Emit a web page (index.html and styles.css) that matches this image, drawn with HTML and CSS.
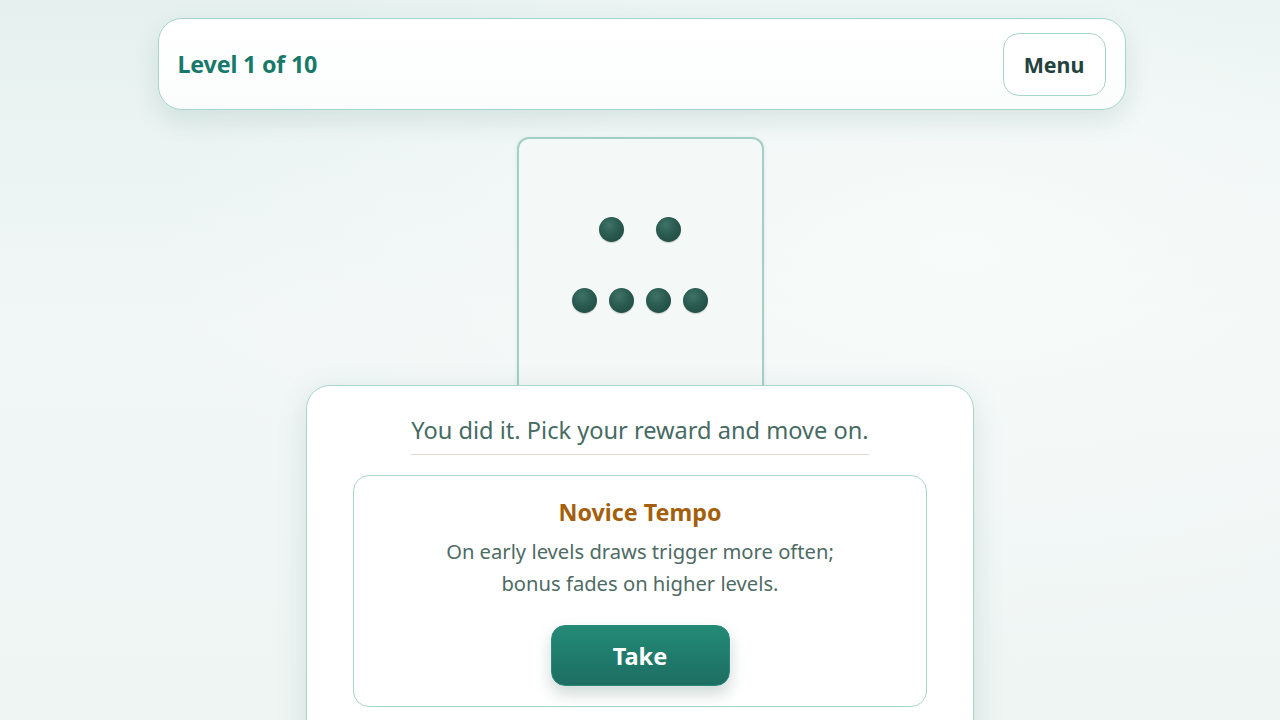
FILE: index.html
```html
<!DOCTYPE html>
<html lang="en">
<head>
    <meta charset="UTF-8">
    <meta name="viewport" content="width=device-width, initial-scale=1.0">
    <title>Level 1</title>
    <link rel="stylesheet" href="styles.css">
</head>
<body>
    <div class="page">
        <header class="topbar">
            <span class="level">Level 1 of 10</span>
            <button class="menu-btn">Menu</button>
        </header>

        <main class="board">
            <div class="card">
                <div class="pips">
                    <div class="pip-row">
                        <span class="pip"></span>
                        <span class="pip"></span>
                    </div>
                    <div class="pip-row tight">
                        <span class="pip"></span>
                        <span class="pip"></span>
                        <span class="pip"></span>
                        <span class="pip"></span>
                    </div>
                </div>
            </div>
        </main>

        <div class="reward">
            <h2 class="reward-title">You did it. Pick your reward and move on.</h2>
            <div class="reward-option">
                <h3 class="option-name">Novice Tempo</h3>
                <p class="option-desc">On early levels draws trigger more often;<br>bonus fades on higher levels.</p>
                <button class="take-btn">Take</button>
            </div>
        </div>
    </div>
</body>
</html>
```

FILE: styles.css
```css
html, body {
    height: 100%;
}

body {
    margin: 0;
    font-family: "Noto Sans", "Open Sans", sans-serif;
    color: #2c4a44;
    background:
        radial-gradient(ellipse at 75% 35%, #f7fbfa 0%, rgba(247, 251, 250, 0) 60%),
        linear-gradient(180deg, #e6f1ef 0%, #f1f7f6 45%, #eef5f3 100%);
    overflow: hidden;
}

.page {
    position: relative;
    height: 100%;
    display: flex;
    flex-direction: column;
    align-items: center;
}

.topbar {
    box-sizing: border-box;
    width: 968px;
    height: 92px;
    margin-top: 18px;
    margin-left: 3px;
    padding: 0 19px;
    display: flex;
    align-items: center;
    justify-content: space-between;
    background: linear-gradient(180deg, #ffffff, #fbfdfc);
    border: 1px solid #a9d5cb;
    border-radius: 24px;
    box-shadow: 0 10px 26px rgba(60, 110, 100, 0.14);
}

.level {
    font-size: 23.3px;
    font-weight: 700;
    color: #17796a;
    letter-spacing: -0.2px;
}

.menu-btn {
    width: 103px;
    height: 63px;
    font-family: inherit;
    font-size: 21.4px;
    font-weight: 700;
    color: #24423d;
    background: #ffffff;
    border: 1.5px solid #a9d5cb;
    border-radius: 16px;
    cursor: pointer;
}

.board {
    margin-top: 27px;
    display: flex;
    justify-content: center;
}

.card {
    box-sizing: border-box;
    width: 247px;
    height: 300px;
    background: #f4f8f7;
    border: 2px solid #a2d0c6;
    border-radius: 12px;
    box-shadow: 0 1px 4px rgba(60, 110, 100, 0.12);
}

.pips {
    padding-top: 78px;
    display: flex;
    flex-direction: column;
    align-items: center;
    gap: 46px;
}

.pip-row {
    display: flex;
    gap: 32px;
}

.pip-row.tight {
    gap: 12px;
}

.pip {
    width: 25px;
    height: 25px;
    border-radius: 50%;
    background: radial-gradient(circle at 40% 32%, #3f7367 0%, #2a5a50 45%, #1d4740 100%);
    box-shadow: 0 1px 1px rgba(0, 0, 0, 0.18);
}

/* reward panel sits over the board */
.reward {
    position: absolute;
    top: 385px;
    left: 50%;
    transform: translateX(-50%);
    box-sizing: border-box;
    width: 668px;
    height: 400px;
    padding: 28px 46px 0;
    background: #ffffff;
    border: 1px solid #a9d5cb;
    border-radius: 24px;
    box-shadow: 0 8px 30px rgba(60, 110, 100, 0.16);
    display: flex;
    flex-direction: column;
    align-items: center;
}

.reward-title {
    margin: 0;
    padding-bottom: 8px;
    font-size: 23.6px;
    line-height: 32px;
    font-weight: 400;
    color: #466b63;
    border-bottom: 1.5px solid #ead9c8;
}

.reward-option {
    box-sizing: border-box;
    width: 574px;
    height: 232px;
    margin-top: 20px;
    padding-top: 21px;
    border: 1px solid #a9d5cb;
    border-radius: 16px;
    display: flex;
    flex-direction: column;
    align-items: center;
    text-align: center;
}

.option-name {
    margin: 0;
    font-size: 23.3px;
    line-height: 30px;
    font-weight: 700;
    color: #a35f0c;
}

.option-desc {
    margin: 8px 0 0;
    font-size: 20.2px;
    line-height: 32px;
    color: #4e6b65;
}

.take-btn {
    margin-top: 26px;
    width: 179px;
    height: 61px;
    font-family: inherit;
    font-size: 23.5px;
    font-weight: 700;
    color: #ffffff;
    background: linear-gradient(180deg, #238a76 0%, #1d6e62 100%);
    border: 1px solid #2a8a78;
    border-radius: 14px;
    box-shadow: 0 8px 16px rgba(30, 80, 70, 0.22);
    cursor: pointer;
}
```
